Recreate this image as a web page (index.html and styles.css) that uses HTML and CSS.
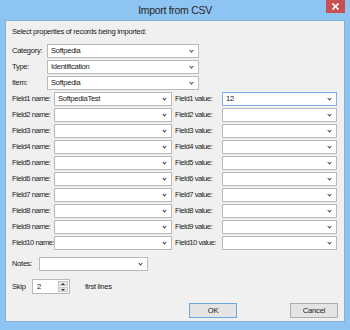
FILE: index.html
```html
<!DOCTYPE html>
<html lang="en">
<head>
    <meta charset="UTF-8">
    <title>Import from CSV</title>
    <link rel="stylesheet" href="styles.css">
</head>
<body>
<div class="window">
    <div class="titlebar">
        <span></span>
        <div class="title">Import from CSV</div>
        <div class="close">
            <svg width="7" height="7" viewBox="0 0 7 7"><path d="M0.5 0.5L6.5 6.5M6.5 0.5L0.5 6.5" stroke="#fff" stroke-width="1.6"/></svg>
        </div>
    </div>
    <div class="client">
        <p class="intro">Select properties of records being imported:</p>

        <div class="props">
            <label>Category:</label><div class="combo">Softpedia</div>
            <label>Type:</label><div class="combo">Identification</div>
            <label>Item:</label><div class="combo">Softpedia</div>
        </div>

        <div class="fields">
            <label>Field1 name:</label><div class="combo">SoftpediaTest</div>
            <label class="vlabel">Field1 value:</label><div class="combo focus">12</div>
            <label>Field2 name:</label><div class="combo"></div>
            <label class="vlabel">Field2 value:</label><div class="combo"></div>
            <label>Field3 name:</label><div class="combo"></div>
            <label class="vlabel">Field3 value:</label><div class="combo"></div>
            <label>Field4 name:</label><div class="combo"></div>
            <label class="vlabel">Field4 value:</label><div class="combo"></div>
            <label>Field5 name:</label><div class="combo"></div>
            <label class="vlabel">Field5 value:</label><div class="combo"></div>
            <label>Field6 name:</label><div class="combo"></div>
            <label class="vlabel">Field6 value:</label><div class="combo"></div>
            <label>Field7 name:</label><div class="combo"></div>
            <label class="vlabel">Field7 value:</label><div class="combo"></div>
            <label>Field8 name:</label><div class="combo"></div>
            <label class="vlabel">Field8 value:</label><div class="combo"></div>
            <label>Field9 name:</label><div class="combo"></div>
            <label class="vlabel">Field9 value:</label><div class="combo"></div>
            <label>Field10 name:</label><div class="combo"></div>
            <label class="vlabel">Field10 value:</label><div class="combo"></div>
        </div>

        <div class="notes">
            <label>Notes:</label><div class="combo"></div>
        </div>

        <div class="skip">
            <label>Skip</label>
            <div class="spin">
                <span>2</span>
                <div class="spin_btns">
                    <div class="up"></div>
                    <div class="down"></div>
                </div>
            </div>
            <span class="after">first lines</span>
        </div>

        <div class="buttons">
            <button class="btn default">OK</button>
            <button class="btn">Cancel</button>
        </div>
    </div>
</div>
</body>
</html>
```

FILE: styles.css
```css
body{
    margin:0;
    font-family:"Liberation Sans", Arial, sans-serif;
}
.window{
    width:350px;
    height:330px;
    box-sizing:border-box;
    background:#8ec4f2;
    padding:0 5px 8px;
    display:flex;
    flex-direction:column;
}
.titlebar{
    height:20px;
    display:grid;
    grid-template-columns:1fr auto 1fr;
    align-items:center;
}
.title{
    font-size:10.5px;
    letter-spacing:-0.3px;
    color:#262626;
}
.close{
    justify-self:end;
    align-self:start;
    width:19px;
    height:13px;
    background:#c75050;
    display:flex;
    align-items:center;
    justify-content:center;
}
.close svg{
    display:block;
}
.client{
    flex:1;
    background:#f0f0f0;
    border:1px solid #84b0d8;
    padding:5px 6px 0 6px;
    font-size:7.6px;
    letter-spacing:-0.3px;
    color:#1a1a1a;
}
.intro{
    margin:0 0 6px;
    line-height:12px;
}
label{
    line-height:14px;
    white-space:nowrap;
}
.combo{
    height:14px;
    box-sizing:border-box;
    border:1px solid #b9b9b9;
    background:#fff;
    padding-left:3px;
    line-height:12px;
    display:flex;
    align-items:center;
}
.combo::after{
    content:"";
    margin-left:auto;
    margin-right:5px;
    margin-top:-2px;
    width:2px;
    height:2px;
    border-right:1px solid #404040;
    border-bottom:1px solid #404040;
    transform:rotate(45deg);
}
.combo.focus{
    border-color:#7db2e8;
}
.props{
    display:grid;
    grid-template-columns:35px 152px;
    row-gap:2px;
}
.fields{
    margin-top:2px;
    display:grid;
    grid-template-columns:42px 118px 50px 115px;
    row-gap:2px;
}
.fields label{
    letter-spacing:-0.45px;
}
.vlabel{
    padding-left:3px;
}
.notes{
    margin-top:7px;
    display:grid;
    grid-template-columns:27px 109px;
}
.skip{
    margin-top:8px;
    display:flex;
    align-items:center;
}
.skip label{
    width:20px;
}
.spin{
    width:38px;
    height:15px;
    box-sizing:border-box;
    border:1px solid #b9b9b9;
    background:#fff;
    display:flex;
    align-items:center;
    padding:1px 1px 1px 4px;
}
.spin span{
    flex:1;
}
.spin_btns{
    width:10px;
    height:100%;
    display:flex;
    flex-direction:column;
    gap:1px;
}
.spin_btns div{
    flex:1;
    background:#e4e4e4;
    border:1px solid #c8c8c8;
    display:flex;
    align-items:center;
    justify-content:center;
}
.up::after{
    content:"";
    border-left:2px solid transparent;
    border-right:2px solid transparent;
    border-bottom:2px solid #333;
}
.down::after{
    content:"";
    border-left:2px solid transparent;
    border-right:2px solid transparent;
    border-top:2px solid #333;
}
.after{
    margin-left:15px;
}
.buttons{
    margin-top:9px;
    display:flex;
    justify-content:flex-end;
}
.btn{
    width:48px;
    height:15px;
    padding:0;
    border:1px solid #adadad;
    background:#e4e4e4;
    font-family:inherit;
    font-size:7.6px;
    letter-spacing:-0.2px;
    color:#1a1a1a;
}
.btn.default{
    border-color:#6aa8e4;
    margin-right:53px;
}
```
